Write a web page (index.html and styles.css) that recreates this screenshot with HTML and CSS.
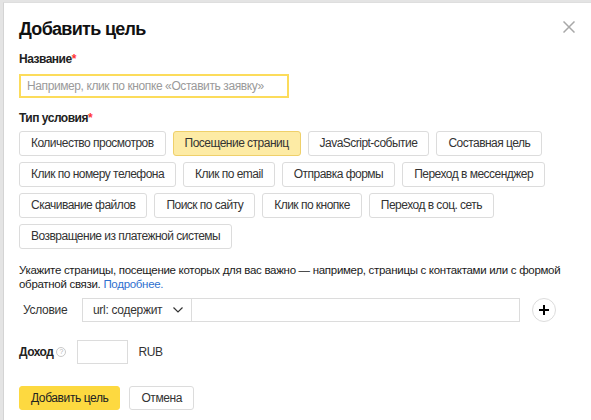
FILE: index.html
```html
<!DOCTYPE html>
<html lang="ru">
<head>
<meta charset="utf-8">
<title>Добавить цель</title>
<link rel="stylesheet" href="styles.css">
</head>
<body>
<div class="modal">
  <div class="head">
    <h1 class="title">Добавить цель</h1>
    <button class="close" aria-label="Закрыть">
      <svg width="12" height="12" viewBox="0 0 12 12"><path d="M0.5 0.5L11.5 11.5M11.5 0.5L0.5 11.5" stroke="#a8a8a8" stroke-width="1.5" fill="none"/></svg>
    </button>
  </div>

  <div class="label label-name">Название<span class="req">*</span></div>
  <div class="name-input">Например, клик по кнопке «Оставить заявку»</div>

  <div class="label label-type">Тип условия<span class="req">*</span></div>
  <div class="types">
    <div class="type-row">
      <span class="chip">Количество просмотров</span>
      <span class="chip chip-on">Посещение страниц</span>
      <span class="chip">JavaScript-событие</span>
      <span class="chip">Составная цель</span>
    </div>
    <div class="type-row">
      <span class="chip">Клик по номеру телефона</span>
      <span class="chip">Клик по email</span>
      <span class="chip">Отправка формы</span>
      <span class="chip">Переход в мессенджер</span>
    </div>
    <div class="type-row">
      <span class="chip">Скачивание файлов</span>
      <span class="chip">Поиск по сайту</span>
      <span class="chip">Клик по кнопке</span>
      <span class="chip">Переход в соц. сеть</span>
    </div>
    <div class="type-row">
      <span class="chip">Возвращение из платежной системы</span>
    </div>
  </div>

  <p class="hint">Укажите страницы, посещение которых для вас важно — например, страницы с контактами или с формой обратной связи. <a class="link" href="#">Подробнее.</a></p>

  <div class="cond-row">
    <span class="cond-label">Условие</span>
    <div class="select">
      <span>url: содержит</span>
      <svg width="10" height="6" viewBox="0 0 10 6"><path d="M0.5 0.5L5 5L9.5 0.5" stroke="#333" stroke-width="1.2" fill="none"/></svg>
    </div>
    <div class="cond-input"></div>
    <button class="plus" aria-label="Добавить условие">
      <svg width="12" height="12" viewBox="0 0 12 12"><path d="M6 1V11M1 6H11" stroke="#000" stroke-width="2" fill="none"/></svg>
    </button>
  </div>

  <div class="income-row">
    <span class="income-label">Доход</span>
    <span class="help">?</span>
    <div class="income-input"></div>
    <span class="currency">RUB</span>
  </div>

  <div class="actions">
    <button class="btn btn-primary">Добавить цель</button>
    <button class="btn">Отмена</button>
  </div>
</div>
</body>
</html>
```
FILE: styles.css
```css
html, body {
  margin: 0;
  padding: 0;
  height: 100%;
}
body {
  background: #e4e4e4;
  font-family: "Liberation Sans", Arial, sans-serif;
  color: #000;
  overflow: hidden;
}
.modal {
  box-sizing: border-box;
  margin: 2px 0 0 3px;
  height: calc(100% - 2px);
  background: #fff;
  border-left: 1px solid #d4d4d4;
  border-top: 1px solid #dedede;
  padding: 0 0 0 15px;
}
.head {
  display: flex;
  justify-content: space-between;
  align-items: flex-start;
  padding-top: 14px;
}
.title {
  margin: 0;
  font-size: 18px;
  font-weight: bold;
  letter-spacing: -0.7px;
  line-height: 24px;
  color: #111;
}
.close {
  border: 0;
  background: none;
  padding: 0;
  margin: 4px 16px 0 0;
  width: 12px;
  height: 12px;
  display: block;
}
.close svg { display: block; }
.label {
  font-size: 12px;
  font-weight: bold;
  letter-spacing: -0.5px;
  color: #222;
  line-height: 14px;
}
.label-name { margin-top: 11px; }
.label-type { margin-top: 13px; }
.req { color: #f33; }
.name-input {
  box-sizing: border-box;
  margin-top: 8px;
  width: 270px;
  height: 24px;
  border: 2px solid #fcdc5b;
  padding: 0 6px;
  font-size: 12px;
  letter-spacing: -0.4px;
  line-height: 20px;
  color: #9a9a9a;
  white-space: nowrap;
}
.types {
  margin-top: 6px;
  display: flex;
  flex-direction: column;
  gap: 6px;
}
.type-row {
  display: flex;
  gap: 7px;
}
.chip {
  box-sizing: border-box;
  height: 25px;
  padding: 0 11px;
  border: 1px solid #dcdcdc;
  border-radius: 3px;
  background: #fff;
  font-size: 12px;
  letter-spacing: -0.52px;
  line-height: 23px;
  color: #333;
  white-space: nowrap;
}
.chip-on {
  background: #fdeba5;
  border-color: #efd06a;
}
.hint {
  margin: 14px 0 0;
  font-size: 11.5px;
  letter-spacing: -0.3px;
  line-height: 14px;
  color: #1a1a1a;
  padding-right: 8px;
}
.link { color: #2e6fcf; text-decoration: none; }
.cond-row {
  margin-top: 7px;
  display: flex;
  align-items: center;
}
.cond-label {
  font-size: 12px;
  letter-spacing: -0.3px;
  color: #333;
  width: 63px;
  padding-left: 4px;
  box-sizing: border-box;
}
.select {
  box-sizing: border-box;
  width: 110px;
  height: 24px;
  border: 1px solid #dcdcdc;
  display: flex;
  align-items: center;
  justify-content: space-between;
  padding: 0 8px 0 10px;
  font-size: 12px;
  letter-spacing: -0.3px;
  color: #333;
}
.select svg { display: block; }
.cond-input {
  box-sizing: border-box;
  width: 328px;
  height: 24px;
  border: 1px solid #dcdcdc;
  border-left: 0;
}
.plus {
  margin-left: 12px;
  width: 24px;
  height: 24px;
  border-radius: 50%;
  border: 1px solid #dcdcdc;
  background: #fff;
  padding: 0;
  display: flex;
  align-items: center;
  justify-content: center;
}
.plus svg { display: block; }
.income-row {
  margin-top: 18px;
  display: flex;
  align-items: center;
}
.income-label {
  font-size: 12px;
  font-weight: bold;
  letter-spacing: -0.5px;
  color: #222;
}
.help {
  box-sizing: border-box;
  margin-left: 3px;
  width: 10px;
  height: 10px;
  border: 1px solid #c9c9c9;
  border-radius: 50%;
  font-size: 7px;
  line-height: 8px;
  text-align: center;
  color: #b5b5b5;
}
.income-input {
  box-sizing: border-box;
  margin-left: 11px;
  width: 51px;
  height: 24px;
  border: 1px solid #dcdcdc;
}
.currency {
  margin-left: 10px;
  font-size: 12px;
  letter-spacing: -0.3px;
  color: #333;
}
.actions {
  margin-top: 22px;
  display: flex;
  gap: 9px;
}
.btn {
  box-sizing: border-box;
  height: 24px;
  padding: 0 11px;
  border: 1px solid #dcdcdc;
  border-radius: 3px;
  background: #fff;
  font-family: inherit;
  font-size: 12px;
  letter-spacing: -0.4px;
  color: #333;
  white-space: nowrap;
}
.btn-primary {
  background: #fdd940;
  border-color: #fdd940;
  color: #222;
}
```
